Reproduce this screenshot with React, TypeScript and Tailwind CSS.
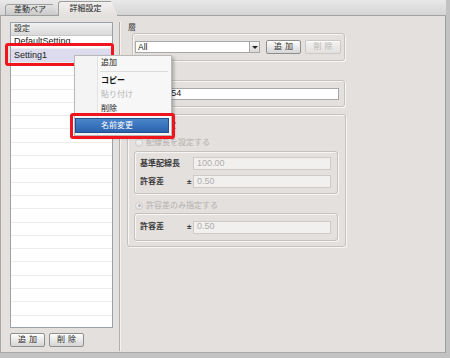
import React from "react"

const ROWS = Array.from({ length: 22 }, (_, i) => i)

function Btn({ label, disabled, className }: { label: string; disabled?: boolean; className: string }) {
  return (
    <div
      className={
        "h-[14px] rounded-[2px] border flex items-center justify-center text-[8px] tracking-[3px] pl-[3px] shadow-[inset_0_1px_0_#ffffff] " +
        (disabled
          ? "border-[#cbc8c6] text-[#b9b6b4] bg-gradient-to-b from-[#f4f3f2] to-[#e3e1df] "
          : "border-[#8e8e8e] text-[#2a2a2a] bg-gradient-to-b from-[#fdfdfd] to-[#d5d5d5] ") +
        className
      }
    >
      {label}
    </div>
  )
}

function Radio({ checked }: { checked?: boolean }) {
  return (
    <div className="w-[8px] h-[8px] rounded-full border border-[#cfcccb] bg-gradient-to-b from-[#f4f4f4] to-[#e2e2e2] flex items-center justify-center">
      {checked && <div className="w-[3px] h-[3px] rounded-full bg-[#b9b6b4]" />}
    </div>
  )
}

function Field({ value }: { value: string }) {
  return (
    <div className="w-[138px] h-[13px] border border-[#cdcac8] bg-[#f1f0ef] flex items-center pl-[3px] text-[9px] text-[#b0adab]">
      {value}
    </div>
  )
}

function Box({ className, children }: { className: string; children?: React.ReactNode }) {
  return (
    <div className={"rounded-[3px] border border-[#c4c1bf] shadow-[inset_1px_1px_0_#f7f6f5,1px_1px_0_#f7f6f5] " + className}>
      {children}
    </div>
  )
}

export default function App() {
  return (
    <div className="w-[450px] h-[358px] bg-[#c2c2c2] relative overflow-hidden font-['Liberation_Sans','Noto_Sans_CJK_JP',sans-serif] text-[#222]">
      <div className="w-[446px] h-[353px] flex flex-col bg-[#e3e0de]">
        {/* tab strip */}
        <div className="h-[16px] flex items-end pl-[5px] bg-gradient-to-b from-[#e9e9e9] to-[#d4d4d4] border-b border-[#a3a3a3]">
          <div className="w-[53px] h-[12px] mb-[-1px] border border-[#9e9e9e] rounded-tl-[3px] bg-gradient-to-b from-[#e2e2e2] to-[#c9c9c9] flex items-center justify-center text-[8px] text-[#333] pr-[3px] [clip-path:polygon(0_0,90%_0,100%_100%,0_100%)]">
            差動ペア
          </div>
          <div className="w-[60px] h-[15px] mb-[-1px] border border-b-0 border-[#9e9e9e] rounded-tl-[3px] bg-gradient-to-b from-[#f2f0ef] to-[#e3e0de] flex items-center justify-center text-[8px] text-[#222] pr-[5px] [clip-path:polygon(0_0,88%_0,100%_100%,0_100%)]">
            詳細設定
          </div>
        </div>

        {/* panel */}
        <div className="flex-1 flex border-l border-r border-b border-[#a8a8a8] border-r-[#9d9d9d] pl-[9px] pt-[6px]">
          {/* left column */}
          <div className="w-[103px] flex flex-col">
            <div className="h-[306px] border border-[#9ba1aa] bg-white overflow-hidden">
              <div className="h-[13px] bg-gradient-to-b from-[#f1f1f1] to-[#d9d9d9] border-b border-[#c7c7c7] flex items-center pl-[3px] text-[8px] text-[#333]">
                設定
              </div>
              <div className="h-[13px] border-b border-[#ececec] flex items-center pl-[3px] text-[9px]">DefaultSetting</div>
              <div className="h-[14px] bg-[#dcdcee] border-b border-[#ececec] flex items-center pl-[3px] text-[9px]">Setting1</div>
              {ROWS.map((i) => (
                <div key={i} className="h-[13.3px] border-b border-[#ececec]" />
              ))}
            </div>
            <div className="flex gap-[4px] mt-[5px]">
              <Btn label="追加" className="w-[35px]" />
              <Btn label="削除" className="w-[35px]" />
            </div>
          </div>

          {/* separator */}
          <div className="ml-[6px] w-px h-[329px] bg-[#b1aeac] shadow-[1px_0_0_#f4f3f2]" />

          {/* right column */}
          <div className="ml-[7px] w-[220px] flex flex-col">
            <div className="h-[11px] pl-[1px] text-[8px] leading-[11px] text-[#333]">層</div>
            <Box className="ml-[5px] w-[213px] h-[28px] flex items-center pl-[2px]">
              <div className="w-[125px] h-[12px] border border-[#a7a7a7] bg-white flex">
                <div className="flex-1 text-[8.5px] leading-[10px] pl-[2px]">All</div>
                <div className="w-[10px] h-full border-l border-[#a7a7a7] bg-gradient-to-b from-[#f8f8f8] to-[#d8d8d8] flex items-center justify-center">
                  <div className="w-0 h-0 border-l-[3px] border-r-[3px] border-t-[3px] border-l-transparent border-r-transparent border-t-[#222]" />
                </div>
              </div>
              <Btn label="追加" className="w-[35px] ml-[6px]" />
              <Btn label="削除" disabled className="w-[36px] ml-[4px]" />
            </Box>

            <div className="h-[19px] pl-[1px] pt-[7px] text-[8px] leading-[11px] text-[#333]">差動ペア名</div>
            <Box className="ml-[5px] w-[213px] h-[27px] flex items-center pl-[2px] pr-[5px]">
              <div className="flex-1 h-[12px] border border-[#a7a7a7] bg-white flex items-center pl-[6px] text-[9px]">DiffPair54</div>
            </Box>

            <Box className="mt-[7px] w-[219px] h-[133px] pl-[6px] pt-[5px]">
              <div className="h-[11px] pl-[2px] text-[8px] leading-[11px] text-[#333]">配線長設定</div>
              <div className="h-[17px] mt-[3px] flex items-center gap-[3px] pl-[1px] text-[8px] text-[#b3b0ae]">
                <Radio />
                配線長を設定する
              </div>
              <Box className="w-[204px] h-[43px] flex flex-col pt-[5px] pl-[5px] gap-[5px]">
                <div className="flex items-center h-[13px]">
                  <div className="w-[53px] text-[8px] font-bold text-[#3a3a3a]">基準配線長</div>
                  <Field value="100.00" />
                </div>
                <div className="flex items-center h-[13px]">
                  <div className="w-[47px] text-[8px] font-bold text-[#3a3a3a]">許容差</div>
                  <div className="w-[6px] text-[8px] font-bold text-[#3a3a3a]">±</div>
                  <Field value="0.50" />
                </div>
              </Box>
              <div className="h-[19px] pt-[4px] flex items-center gap-[3px] pl-[1px] text-[8px] text-[#b3b0ae]">
                <Radio checked />
                許容差のみ指定する
              </div>
              <Box className="w-[204px] h-[28px] flex items-center pl-[5px]">
                <div className="w-[47px] text-[8px] font-bold text-[#3a3a3a]">許容差</div>
                <div className="w-[6px] text-[8px] font-bold text-[#3a3a3a]">±</div>
                <Field value="0.50" />
              </Box>
            </Box>
          </div>
        </div>
      </div>

      {/* red annotation around Setting1 */}
      <div className="absolute left-[5px] top-[43px] w-[109px] h-[23px] border-[3px] border-[#f0141c] rounded-[3px]" />

      {/* context menu */}
      <div className="absolute left-[74px] top-[55px] w-[98px] h-[81px] bg-[#f7f7f7] border border-[#b9b9b9] shadow-[2px_2px_3px_rgba(0,0,0,0.25)] flex text-[8px]">
        <div className="w-[23px] border-r border-[#e2e2e2] bg-[#f4f4f4]" />
        <div className="flex-1 flex flex-col pt-[1px]">
          <div className="h-[12px] flex items-center pl-[3px] text-[#222]">追加</div>
          <div className="h-px bg-[#dcdcdc] ml-[2px] mr-[3px] my-[2px]" />
          <div className="h-[14px] flex items-center pl-[3px] text-[#111] font-bold">コピー</div>
          <div className="h-[14px] flex items-center pl-[3px] text-[#b2b2b2]">貼り付け</div>
          <div className="h-[14px] flex items-center pl-[3px] text-[#222]">削除</div>
        </div>
      </div>
      <div className="absolute left-[75px] top-[118px] w-[94px] h-[15px] bg-gradient-to-b from-[#4a86cc] to-[#2b62ad] border border-[#23518f] flex items-center pl-[25px] text-[8px] text-white">
        名前変更
      </div>

      {/* red annotation around 名前変更 */}
      <div className="absolute left-[70px] top-[113px] w-[105px] h-[26px] border-[3px] border-[#f0141c] rounded-[3px]" />
    </div>
  )
}
